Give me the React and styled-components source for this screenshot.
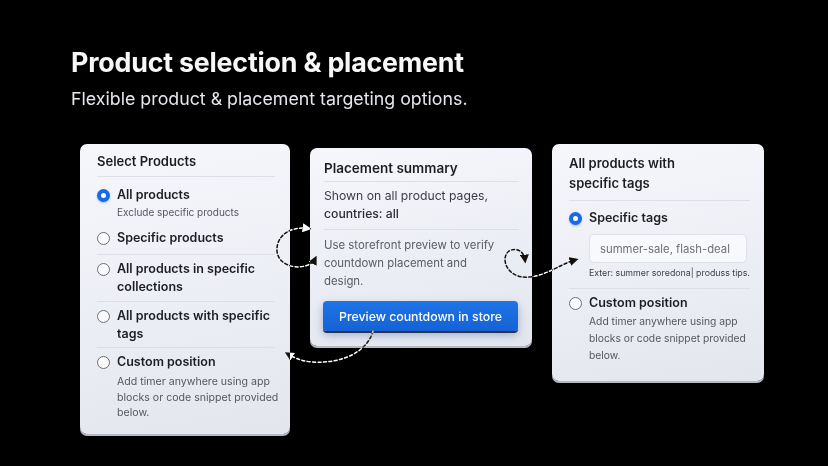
import React from 'react'
import styled, { createGlobalStyle } from 'styled-components';

const GlobalStyle = createGlobalStyle`
    html, body {
        margin: 0;
        background: #000;
        font-family: Inter, "Noto Sans", sans-serif;
        -webkit-font-smoothing: antialiased;
    }
`;

const Page = styled.div`
    position: relative;
    width: 828px;
    height: 466px;
    padding-top: 46px;
    box-sizing: border-box;
    background: #000;
    overflow: hidden;
`;

const Header = styled.div`
    padding-left: 71px;
`;

const Title = styled.h1`
    margin: 0;
    font-size: 26.8px;
    line-height: 32px;
    font-weight: 700;
    letter-spacing: -0.2px;
    color: #f7f7f9;
`;

const Subtitle = styled.p`
    margin: 10px 0 0;
    font-size: 17.8px;
    line-height: 22px;
    color: #e6e7ee;
`;

const Row = styled.div`
    display: flex;
    align-items: flex-start;
    gap: 20px;
    margin-top: 34px;
    padding-left: 80px;
`;

const Card = styled.div`
    width: ${p => p.$w}px;
    margin-top: ${p => p.$top || 0}px;
    padding: ${p => p.$pad};
    box-sizing: border-box;
    border-radius: 7px;
    background: linear-gradient(170deg, #f6f7fb 0%, #eceef5 55%, #e4e6ee 100%);
    box-shadow: 0 2px 0 #b7bac4, 0 5px 12px rgba(0,0,0,0.5);
`;

const CardTitle = styled.div`
    font-size: ${p => p.$size || 13}px;
    line-height: ${p => p.$lh || 18}px;
    font-weight: 600;
    color: #1d1e24;
    padding-bottom: ${p => p.$pb || 6}px;
    margin-right: ${p => p.$mr || 0}px;
    border-bottom: 1px solid #dcdfe8;
`;

const Option = styled.div`
    display: flex;
    align-items: flex-start;
    gap: 7px;
    padding: ${p => p.$pad || '5px 0 6px'};
    margin-right: ${p => p.$mr || 0}px;
    border-top: 1px solid ${p => p.$line ? '#dcdfe8' : 'transparent'};
`;

const Radio = styled.span`
    flex: none;
    width: 13px;
    height: 13px;
    margin-top: 2.5px;
    box-sizing: border-box;
    border-radius: 50%;
    background: ${p => p.$on ? '#1a6ae6' : '#fbfbfd'};
    border: ${p => p.$on ? 'none' : '1.4px solid #6c6f79'};
    box-shadow: ${p => p.$on ? '0 1px 2px rgba(26,106,230,0.4)' : 'none'};
    display: flex;
    align-items: center;
    justify-content: center;
    &::after {
        content: '';
        display: ${p => p.$on ? 'block' : 'none'};
        width: 5px;
        height: 5px;
        border-radius: 50%;
        background: #fff;
    }
`;

const OptionBody = styled.div`
    display: flex;
    flex-direction: column;
    min-width: 0;
`;

const OptionLabel = styled.div`
    font-size: 12.5px;
    line-height: 18px;
    font-weight: 600;
    color: #1d1e24;
`;

const OptionNote = styled.div`
    font-size: ${p => p.$size || 11}px;
    line-height: ${p => p.$lh || 15.5}px;
    color: #55585f;
    margin-top: ${p => p.$mt || 0}px;
    margin-right: ${p => p.$mr || 0}px;
`;

const Section = styled.div`
    max-width: ${p => p.$max ? `${p.$max}px` : 'none'};
    padding: ${p => p.$pad};
    border-bottom: ${p => p.$line ? '1px solid #dcdfe8' : 'none'};
    font-size: ${p => p.$size}px;
    line-height: 18px;
    color: ${p => p.$color};
    strong {
        font-weight: 500;
        color: #2a2c33;
    }
`;

const PreviewButton = styled.button`
    display: block;
    width: 195px;
    height: 30px;
    margin: 11px 0 0 -1px;
    padding: 0;
    border: none;
    border-radius: 4px;
    background: linear-gradient(180deg, #1f74e6 0%, #1462d6 100%);
    box-shadow: 0 2px 0 #2c3548, 0 4px 8px rgba(20,60,140,0.35);
    color: #fff;
    font-family: inherit;
    font-size: 12.3px;
    font-weight: 500;
`;

const TagInput = styled.div`
    width: 158px;
    height: 29px;
    margin-top: 7px;
    padding-left: 10px;
    box-sizing: border-box;
    display: flex;
    align-items: center;
    border: 1px solid #dde0e8;
    border-radius: 5px;
    background: #f8f9fc;
    font-size: 11.3px;
    color: #6e7078;
    white-space: nowrap;
`;

const Hint = styled.div`
    margin-top: 3px;
    font-size: 8.8px;
    line-height: 14px;
    color: #3c3e45;
    white-space: nowrap;
`;

const Arrows = styled.svg`
    position: absolute;
    left: 0;
    top: 0;
    width: 828px;
    height: 466px;
    pointer-events: none;
    mix-blend-mode: difference;
    path.trail {
        fill: none;
        stroke: #fff;
        stroke-width: 1.5;
        stroke-dasharray: 3 2.4;
        stroke-linecap: round;
    }
`;

const trails = [
    'M 308 228.5 C 290 226, 276 236, 277 251 C 278 265, 296 270, 308 265 C 312 263, 314 261, 315 259',
    'M 373 331 C 368 350, 345 364, 312 362 C 300 361, 293 357, 288 354',
    'M 525 260 C 524 251, 516 247, 509 251 C 501 257, 505 274, 522 277 C 542 279, 558 265, 575 260',
];

const FlowArrows = () => (
    <Arrows viewBox="0 0 828 466">
        <defs>
            <marker id="tip" viewBox="0 0 10 10" refX="6" refY="5" markerWidth="6" markerHeight="6" orient="auto-start-reverse">
                <path d="M0 0 L10 5 L0 10 Z" fill="#fff" />
            </marker>
        </defs>
        <path className="trail" d={trails[0]} markerStart="url(#tip)" markerEnd="url(#tip)" />
        <path className="trail" d={trails[1]} markerEnd="url(#tip)" />
        <path className="trail" d={trails[2]} markerStart="url(#tip)" markerEnd="url(#tip)" />
    </Arrows>
);

const productOptions = [
    { label: 'All products', note: 'Exclude specific products', on: true, pad: '8px 0 4px', small: true },
    { label: 'Specific products', pad: '4px 0 7px' },
    { label: 'All products in specific collections', line: true, pad: '5px 0 5px' },
    { label: 'All products with specific tags', line: true, pad: '5px 0 4px' },
    { label: 'Custom position', note: 'Add timer anywhere using app blocks or code snippet provided below.', line: true, pad: '5px 0 0' },
];

const App = () => {
  return (
    <Page>
        <GlobalStyle />
        <Header>
            <Title>Product selection &amp; placement</Title>
            <Subtitle>Flexible product &amp; placement targeting options.</Subtitle>
        </Header>
        <Row>
            <Card $w={210} $pad="8px 3px 13px 17px">
                <CardTitle $pb={6} $mr={12}>Select Products</CardTitle>
                {productOptions.map(opt => (
                    <Option key={opt.label} $line={opt.line} $pad={opt.pad} $mr={12}>
                        <Radio $on={opt.on} />
                        <OptionBody>
                            <OptionLabel>{opt.label}</OptionLabel>
                            {opt.note && (
                                <OptionNote
                                    $size={opt.small ? 10 : 10.6}
                                    $lh={opt.small ? 16 : 15.5}
                                    $mt={opt.small ? 0 : 3}
                                    $mr={opt.small ? 0 : -12}
                                >
                                    {opt.note}
                                </OptionNote>
                            )}
                        </OptionBody>
                    </Option>
                ))}
            </Card>
            <Card $w={222} $top={4} $pad="11px 13px 15px 14px">
                <CardTitle $size={13.5} $pb={4}>Placement summary</CardTitle>
                <Section $line $pad="5px 0 6px" $size={12.2} $color="#3a3c44">
                    Shown on all product pages,<br /><strong>countries: all</strong>
                </Section>
                <Section $pad="6px 0 0" $max={176} $size={11.4} $color="#5a5d66">
                    Use storefront preview to verify countdown placement and design.
                </Section>
                <PreviewButton>Preview countdown in store</PreviewButton>
            </Card>
            <Card $w={212} $pad="9px 14px 17px 17px">
                <CardTitle $size={13} $lh={20} $pb={7}>All products with<br />specific tags</CardTitle>
                <Option $pad="7px 0 8px">
                    <Radio $on />
                    <OptionBody>
                        <OptionLabel>Specific tags</OptionLabel>
                        <TagInput>summer-sale, flash-deal</TagInput>
                        <Hint>Exter: summer soredona| produss tips.</Hint>
                    </OptionBody>
                </Option>
                <Option $line $pad="5px 0 0">
                    <Radio />
                    <OptionBody>
                        <OptionLabel>Custom position</OptionLabel>
                        <OptionNote $size={10.3} $lh={17} $mt={1}>
                            Add timer anywhere using app blocks or code snippet provided below.
                        </OptionNote>
                    </OptionBody>
                </Option>
            </Card>
        </Row>
        <FlowArrows />
    </Page>
  )
}

export default App
